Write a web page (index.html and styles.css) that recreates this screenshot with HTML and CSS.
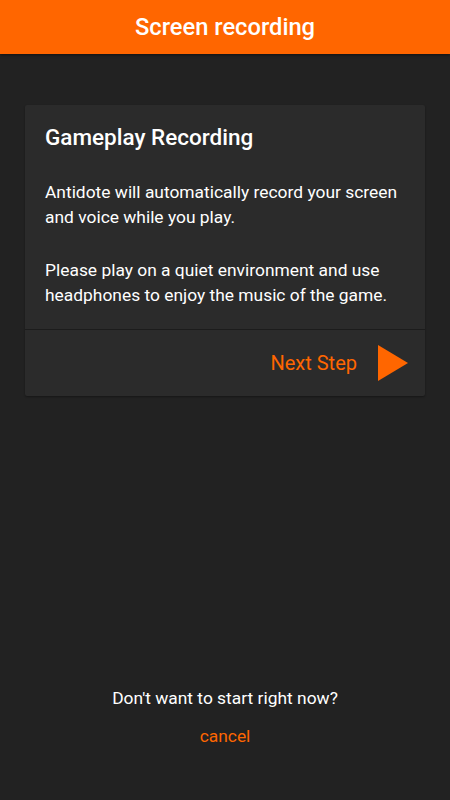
FILE: index.html
```html
<!DOCTYPE html>
<html>
<head>
<meta charset="utf-8">
<link rel="stylesheet" href="styles.css">
</head>
<body>
<div class="app">
  <header class="topbar">Screen recording</header>
  <main class="content">
    <section class="card">
      <div class="card-body">
        <h1 class="card-title">Gameplay Recording</h1>
        <p class="card-text">Antidote will automatically record your screen and voice while you play.</p>
        <p class="card-text">Please play on a quiet environment and use headphones to enjoy the music of the game.</p>
      </div>
      <div class="card-actions">
        <span class="next-label">Next Step</span>
        <svg class="next-icon" width="30" height="36" viewBox="0 0 30 36"><polygon points="0,0 30,18 0,36" fill="#ff6600"/></svg>
      </div>
    </section>
  </main>
  <footer class="bottom">
    <p class="bottom-question">Don't want to start right now?</p>
    <p class="bottom-cancel">cancel</p>
  </footer>
</div>
</body>
</html>
```
FILE: styles.css
```css
html, body {
  margin: 0;
  padding: 0;
  background: #222222;
}
body {
  font-family: Roboto, "Liberation Sans", sans-serif;
  color: #ffffff;
}
.app {
  width: 450px;
  height: 800px;
  display: flex;
  flex-direction: column;
}
.topbar {
  height: 54px;
  background: #ff6600;
  color: #ffffff;
  font-size: 23.7px;
  font-weight: 500;
  display: flex;
  align-items: center;
  justify-content: center;
  box-shadow: 0 1px 3px rgba(0,0,0,0.5);
}
.content {
  padding: 51px 25px 0 25px;
}
.card {
  background: #2b2b2b;
  border-radius: 2px;
  box-shadow: 0 1px 2px rgba(0,0,0,0.35);
}
.card-body {
  padding: 18px 20px 21px 20px;
  border-bottom: 1px solid #1c1c1c;
}
.card-title {
  margin: 0;
  font-size: 22.5px;
  font-weight: 500;
  line-height: 28px;
}
.card-text {
  margin: 29px 0 0 0;
  font-size: 17.4px;
  line-height: 25px;
}
.card-text + .card-text {
  margin-top: 28px;
}
.card-actions {
  height: 66px;
  display: flex;
  align-items: center;
  justify-content: flex-end;
  padding-right: 17px;
  gap: 21px;
}
.next-label {
  color: #ff6600;
  font-size: 20px;
}
.next-icon {
  display: block;
}
.bottom {
  margin-top: auto;
  padding-bottom: 52px;
  text-align: center;
}
.bottom-question {
  margin: 0;
  font-size: 17.4px;
  line-height: 24px;
}
.bottom-cancel {
  margin: 14px 0 0 0;
  font-size: 17.4px;
  line-height: 24px;
  color: #ff6600;
}
```
